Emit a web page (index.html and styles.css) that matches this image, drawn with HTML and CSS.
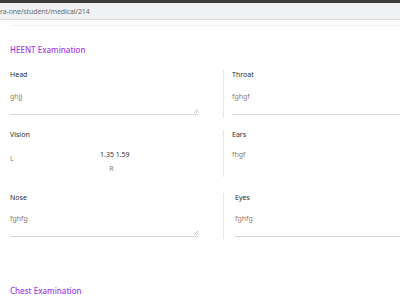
FILE: index.html
```html
<!DOCTYPE html>
<html>
<head>
<meta charset="utf-8">
<link rel="stylesheet" href="styles.css">
</head>
<body>
<div class="chrome-top"></div>
<div class="addr"><span class="url">ra-one/student/medical/214</span></div>
<div class="page">
  <div class="rule"></div>
  <h2 class="section-title first">HEENT Examination</h2>

  <div class="row row-head">
    <div class="cell">
      <div class="label">Head</div>
      <div class="value textarea">ghjj<svg class="grip" width="5" height="5" viewBox="0 0 5 5"><path d="M1 5L5 1M3 5L5 3" stroke="#b5b5b5" stroke-width="0.8"/></svg></div>
    </div>
    <div class="cell right">
      <div class="label">Throat</div>
      <div class="value line">fghgf</div>
    </div>
  </div>

  <div class="row row-vision">
    <div class="cell">
      <div class="label">Vision</div>
      <div class="vision">
        <span class="eye-l">L</span>
        <div class="acuity">
          <div class="nums">1.35 1.59</div>
          <div class="eye-r">R</div>
        </div>
      </div>
    </div>
    <div class="cell right">
      <div class="label">Ears</div>
      <div class="value plain">fhgf</div>
    </div>
  </div>

  <div class="row row-nose">
    <div class="cell">
      <div class="label">Nose</div>
      <div class="value textarea">fghfg<svg class="grip" width="5" height="5" viewBox="0 0 5 5"><path d="M1 5L5 1M3 5L5 3" stroke="#b5b5b5" stroke-width="0.8"/></svg></div>
    </div>
    <div class="cell right wide">
      <div class="label">Eyes</div>
      <div class="value line">fghfg</div>
    </div>
  </div>

  <h2 class="section-title second">Chest Examination</h2>
</div>
</body>
</html>
```
FILE: styles.css
```css
html, body {
  margin: 0;
  padding: 0;
  background: #ffffff;
  overflow: hidden;
  font-family: "Noto Sans", "Open Sans", sans-serif;
}
.chrome-top {
  height: 3px;
  background: #3d3c37;
}
.addr {
  height: 16px;
  background: #f0f1f2;
  border-bottom: 1px solid #dedfe0;
  display: flex;
  align-items: center;
}
.url {
  font-size: 7px;
  color: #6f6f6f;
  margin-left: 0;
  letter-spacing: -0.1px;
}
.page {
  padding-left: 10px;
}
.rule {
  margin-top: 5px;
  height: 1px;
  background: #f1f1f1;
}
.section-title {
  margin: 0;
  font-size: 8px;
  line-height: 10px;
  font-weight: 500;
  color: #a33bee;
}
.section-title.first {
  margin-top: 19px;
}
.section-title.second {
  margin-top: 47px;
}
.row {
  display: grid;
  grid-template-columns: 213px 1fr;
}
.row-head {
  margin-top: 15px;
  height: 48px;
}
.row-vision {
  margin-top: 12px;
  height: 47px;
}
.row-nose {
  margin-top: 16px;
  height: 46px;
}
.cell.right {
  border-left: 1px solid #e8e8e8;
  padding-left: 8px;
  margin-right: -20px;
}
.cell.right.wide {
  padding-left: 11px;
}
.label {
  font-size: 7px;
  line-height: 10px;
  color: #2b2b2b;
}
.value {
  font-size: 7px;
  line-height: 10px;
  color: #947a6c;
  margin-top: 12px;
  position: relative;
}
.value.textarea {
  width: 188px;
  height: 10px;
  padding-bottom: 11px;
  border-bottom: 1px solid #d6d6d6;
}
.value.line {
  height: 10px;
  padding-bottom: 11px;
  border-bottom: 1px solid #d6d6d6;
}
.row-head .value.textarea,
.row-head .value.line {
  padding-bottom: 12px;
}
.row-nose .value.textarea,
.row-nose .value.line {
  margin-top: 11px;
  padding-bottom: 12px;
}
.grip {
  position: absolute;
  right: 0;
  bottom: 1px;
}
.vision {
  display: flex;
  width: 188px;
  margin-top: 10px;
}
.eye-l {
  font-size: 7px;
  line-height: 10px;
  color: #947a6c;
  width: 90px;
  margin-top: 4px;
}
.acuity {
  text-align: center;
  width: 28px;
  white-space: nowrap;
}
.nums {
  font-size: 7px;
  line-height: 10px;
  color: #2f3140;
}
.eye-r {
  font-size: 7px;
  line-height: 10px;
  color: #947a6c;
  margin-top: 4px;
  margin-right: 5px;
}
.value.plain {
  margin-top: 10px;
}
```
